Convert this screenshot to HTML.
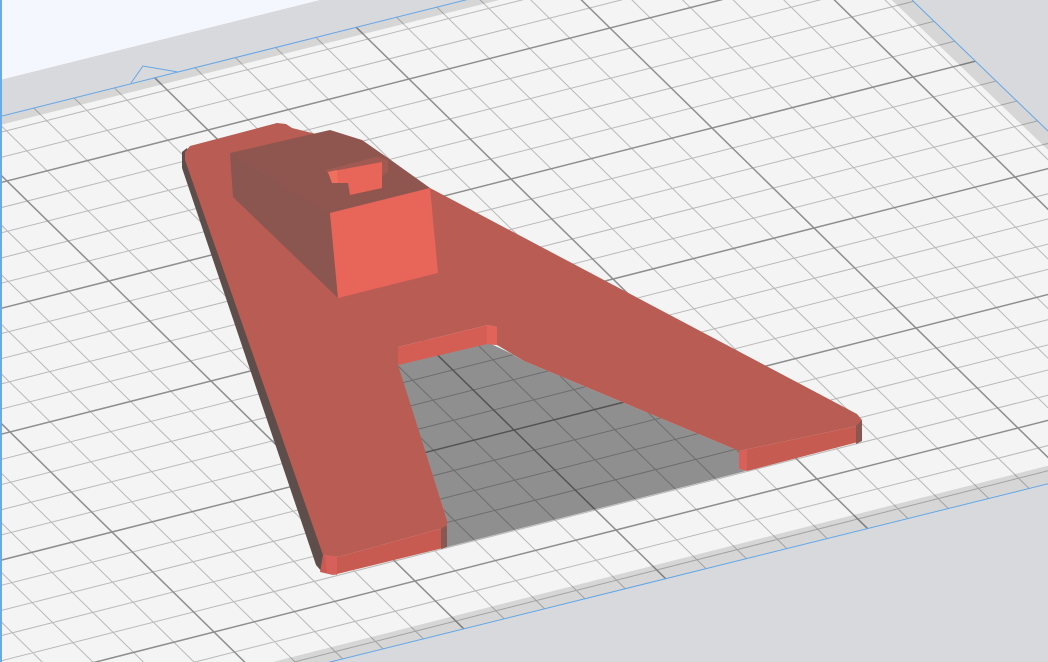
<!DOCTYPE html>
<html><head><meta charset="utf-8"><style>
html,body{margin:0;padding:0;background:#f4f7fd;overflow:hidden;width:1048px;height:662px;}
svg{display:block;overflow:hidden;}
</style></head><body>
<svg width="1048" height="662" viewBox="0 0 1048 662" xmlns="http://www.w3.org/2000/svg">
<defs>
<clipPath id="plate"><polygon points="0,116 819,-89 1341,411 0,744"/></clipPath>
<clipPath id="view"><rect width="1048" height="662"/></clipPath>
</defs>
<g clip-path="url(#view)">
<rect width="1048" height="662" fill="#f4f7fd"/>
<polygon points="0,80 400,-20 1048,-20 1048,662 0,662" fill="#d8d9dc"/>
<polygon points="0,662 1048,440 1048,470 0,690" fill="#dddee1"/>
<polygon points="0,116 819,-89 1341,411 0,744" fill="#f4f4f4"/>
<g clip-path="url(#plate)">
<g transform="matrix(0.804 -0.204 0.408 0.4 712 128)" fill="none">
<path stroke="#b9b9b9" stroke-width="1" vector-effect="non-scaling-stroke" d="M-1200 -700V1350M-1150 -700V1350M-1100 -700V1350M-1050 -700V1350M-950 -700V1350M-900 -700V1350M-850 -700V1350M-800 -700V1350M-700 -700V1350M-650 -700V1350M-600 -700V1350M-550 -700V1350M-450 -700V1350M-400 -700V1350M-350 -700V1350M-300 -700V1350M-200 -700V1350M-150 -700V1350M-100 -700V1350M-50 -700V1350M50 -700V1350M100 -700V1350M150 -700V1350M200 -700V1350M300 -700V1350M350 -700V1350M400 -700V1350M450 -700V1350M550 -700V1350M600 -700V1350
M-1350 -650H650M-1350 -600H650M-1350 -550H650M-1350 -450H650M-1350 -400H650M-1350 -350H650M-1350 -300H650M-1350 -200H650M-1350 -150H650M-1350 -100H650M-1350 -50H650M-1350 50H650M-1350 100H650M-1350 150H650M-1350 200H650M-1350 300H650M-1350 350H650M-1350 400H650M-1350 450H650M-1350 550H650M-1350 600H650M-1350 650H650M-1350 700H650M-1350 800H650M-1350 850H650M-1350 900H650M-1350 950H650M-1350 1050H650M-1350 1100H650M-1350 1150H650M-1350 1200H650M-1350 1300H650"/>
<path stroke="#8e8e8e" stroke-width="1.5" vector-effect="non-scaling-stroke" d="M-1250 -700V1350M-1000 -700V1350M-750 -700V1350M-500 -700V1350M-250 -700V1350M0 -700V1350M250 -700V1350M500 -700V1350
M-1350 -500H650M-1350 -250H650M-1350 0H650M-1350 250H650M-1350 500H650M-1350 750H650M-1350 1000H650M-1350 1250H650"/>
</g>
<g fill="#000" opacity="0.12">
<polygon points="0,116 819,-89 819,-80 0,125"/>
<polygon points="0,744 1341,411 1300,402 0,731"/>
<polygon points="819,-89 1341,411 1320,411 799,-89"/>
</g>
</g>
<g fill="none" stroke="#62a6e6" stroke-width="1">
<polyline points="0,116.5 819,-88.5"/>
<polyline points="0,744 1341,411"/>
<polyline points="912,0 1048,131"/>
<polyline points="131,83 143,66 178,72"/>
</g>
<rect x="0" y="0" width="2" height="662" fill="#6aaae8"/>
<polygon points="397,364 487,342 510,353 524,361 739,451 739,469 746,471 447,547 447,520" fill="#000" opacity="0.41"/>
<polygon points="182,152 187,148 324,555 322,572 316,565 182,168" fill="#5e4e4b"/>
<polygon points="185,152 190,146 277,123 286,124 292,128 340,140 430,188 857,414 862,420 857,426 739,451 524,361 497,345 497,327 488,325 398,347 398,365 447,520 447,527 338,557 323,555 185,160" fill="#b95c53"/>
<polygon points="739,451 857,426 862,421 862,441 747,471 739,469" fill="#c65b51"/>
<polygon points="856,426 862,420 862,441 856,444" fill="#8a5651"/>
<polygon points="739,451 747,450 747,471 739,469" fill="#d8605a"/>
<polygon points="323,555 338,557 447,527 447,547 333,575 320,572" fill="#c85b51"/>
<polygon points="325,555 337,557 337,575 327,573" fill="#d8605a"/>
<polygon points="441,528 447,526 447,547 441,549" fill="#8a5651"/>
<polygon points="398,347 488,325 497,327 497,345 487,344 398,365" fill="#d45d54"/>
<polygon points="487,325 497,327 497,345 487,344" fill="#e0645a"/>
<polygon points="230,153 330,130 362,140 388,158 430,188 330,213" fill="#8f5650"/>
<polygon points="230,153 330,213 338,298 233,197" fill="#8b5550"/>
<polygon points="330,213 430,188 438,273 338,298" fill="#e8655a"/>
<polygon points="326,170 376,157 388,160 388,172 382,176 382,162 328,174" fill="#a05a52"/>
<polygon points="328,172 382,162 382,188 350,195 348,183 332,183" fill="#e8655a"/>
<polygon points="328,172 337,170 338,183 332,183" fill="#f0705f"/>
</g>
</svg>
</body></html>
